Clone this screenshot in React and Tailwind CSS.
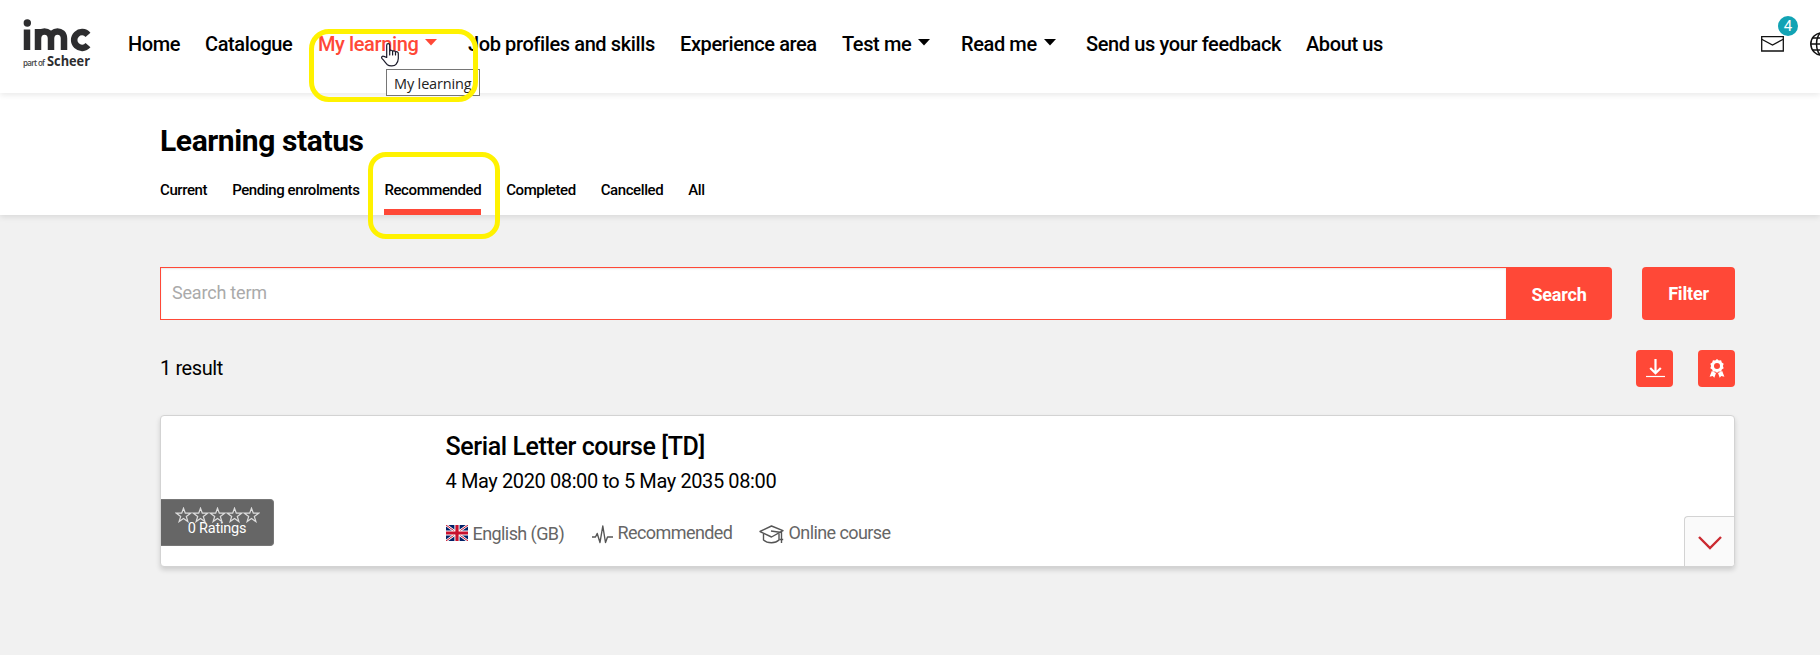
import { useState } from "react";
import { clsx } from "clsx";

const navItems = [
    { label: "Home", className: "w-[77px]" },
    { label: "Catalogue", className: "w-[113px]" },
    { label: "My learning", className: "w-[150px]", menu: true, active: true },
    { label: "Job profiles and skills", className: "w-[212px]" },
    { label: "Experience area", className: "w-[162px]" },
    { label: "Test me", className: "w-[119px]", menu: true },
    { label: "Read me", className: "w-[125px]", menu: true },
    { label: "Send us your feedback", className: "w-[220px]" },
    { label: "About us", className: "w-[90px]" },
];

const tabs = ["Current", "Pending enrolments", "Recommended", "Completed", "Cancelled", "All"];

function Logo() {
    return (
        <svg width="70" height="54" viewBox="0 0 70 54" className="block" fill="#2d2d2f">
            <circle cx="4.3" cy="4" r="3.7" />
            <g fill="none" stroke="#2d2d2f" strokeWidth="6.500">
                <path d="M4 10.500V31" />
                <path d="M15 31V10M15 19.500c0-9.500 13-9.500 13 0V31M28 19.500c0-9.500 13-9.500 13 0V31" />
                <path d="M65 15.800a7.900 7.900 0 1 0 0 10.400" />
            </g>
            <text x="0" y="46.500" fontSize="8" textLength="22" fill="#444" fontWeight="600" fontFamily="Open Sans, sans-serif">part of</text>
            <text x="24" y="46.500" fontSize="13.500" textLength="43" lengthAdjust="spacingAndGlyphs" fontWeight="700" fontFamily="Open Sans, sans-serif">Scheer</text>
        </svg>
    );
}

function Caret() {
    return (
        <svg width="12" height="7" viewBox="0 0 12 7" className="mb-[3px] ml-[7px] shrink-0" fill="currentColor">
            <path d="M0 0h12L6 6.500z" />
        </svg>
    );
}

function MailIcon() {
    return (
        <svg width="23" height="16" viewBox="0 0 23 16" className="block" fill="none" stroke="#111" strokeWidth="1.300">
            <path d="M.7.7h21.600v14.300H.7z" />
            <path d="M.7 3.200l10.800 5.800L22.300 3.200" />
        </svg>
    );
}

function GlobeIcon() {
    return (
        <svg width="24" height="24" viewBox="0 0 24 24" className="block shrink-0" fill="none" stroke="#111" strokeWidth="1.500">
            <circle cx="12" cy="12" r="11.200" />
            <ellipse cx="12" cy="12" rx="5.500" ry="11.200" />
            <path d="M12 .7v22.600M.7 12h22.600M2.500 6h19M2.500 18h19" />
        </svg>
    );
}

function HandCursor() {
    return (
        <svg width="19" height="24" viewBox="0 0 19 24" className="absolute left-[381px] top-[43px]" fill="#fff" stroke="#1a1a2a" strokeWidth="1.200" strokeLinejoin="round" strokeLinecap="round">
            <path d="M5.700 14.500V2.300c0-2.200 3-2.200 3 0V8c.3-1.200 2.800-1 2.900.6.4-1.200 2.800-.9 2.900.7.5-1 2.800-.7 2.800 1.100v5.100c0 2.800-1.200 4.500-2.300 5.800-1.600 2-6.500 2.200-8.600.5C4.500 20 3.800 18.400 1.100 15.600c-1.200-1.500.3-3.100 1.900-2.200z" />
            <path d="M8.700 8v4M11.600 8.600V12M14.500 9.500V12" fill="none" />
        </svg>
    );
}

function FlagGB() {
    return (
        <svg width="22" height="16" viewBox="0 0 22 16" className="block shrink-0">
            <path d="M0 0h22v16H0z" fill="#012169" />
            <path d="M0 0l22 16M22 0L0 16" stroke="#fff" strokeWidth="2.600" />
            <path d="M0 0l22 16M22 0L0 16" stroke="#c8102e" strokeWidth="1" />
            <path d="M11 0v16M0 8h22" stroke="#fff" strokeWidth="5.200" />
            <path d="M11 0v16M0 8h22" stroke="#c8102e" strokeWidth="3.200" />
        </svg>
    );
}

function PulseIcon() {
    return (
        <svg width="21" height="19" viewBox="0 0 21 19" className="mt-[3px] block shrink-0" fill="none" stroke="#555" strokeWidth="1.400" strokeLinejoin="round">
            <path d="M0 12h3.500l1.700-3.500L8 17.500 10.800 1l2.700 16.500 2-5.500H21" />
        </svg>
    );
}

function CapIcon() {
    return (
        <svg width="25" height="19" viewBox="0 0 25 19" className="mt-[3px] block shrink-0" fill="none" stroke="#555" strokeWidth="1.400" strokeLinejoin="round">
            <path d="M1 6.500L12.500 1 24 5.700 12.500 12z" />
            <path d="M4.500 9v6c4 3.600 12 3.600 15.500 0V8.500M12 6l10.500 1.500V18M20.800 14.500h3.400" />
        </svg>
    );
}

function Star() {
    return (
        <svg width="17" height="16" viewBox="0 0 17 16" className="block" fill="none" stroke="#ddd" strokeWidth="1.200">
            <path d="M8.500 1.200l1.800 5h5.300l-4.300 3.200 1.600 5.200-4.400-3.100-4.400 3.100 1.600-5.200L1.400 6.200h5.300z" />
        </svg>
    );
}

export default function App() {
    const [activeTab, setActiveTab] = useState("Recommended");
    const [term, setTerm] = useState("");

    return (
        <div className="relative h-[655px] w-full overflow-hidden bg-[#f1f1f1] font-[Roboto,sans-serif] text-black">
            <header className="relative z-10 flex h-[93px] bg-white shadow-[0_2px_6px_rgba(0,0,0,0.09)]">
                <div className="w-[128px] shrink-0 pt-[19px] pl-[23px]">
                    <Logo />
                </div>
                <nav className="flex h-[87px] shrink-0 items-center text-[20px] font-medium tracking-[-0.39px]">
                    {navItems.map((item) => (
                        <a key={item.label} href="#" className={clsx("flex shrink-0 items-center whitespace-nowrap", item.className, item.active && "text-[#ff4837]")}>
                            {item.label}
                            {item.menu && <Caret />}
                        </a>
                    ))}
                </nav>
                <div className="ml-auto flex w-[59px] shrink-0 pt-[32px]">
                    <div className="relative mt-[4px] mr-[26px]">
                        <MailIcon />
                        <span className="absolute -top-[20px] left-[17px] flex size-5 items-center justify-center rounded-full bg-[#12a3b4] text-[15px] text-white">4</span>
                    </div>
                    <GlobeIcon />
                </div>
            </header>

            <section className="h-[122px] bg-white pl-[160px] shadow-[0_2px_6px_rgba(0,0,0,0.1)]">
                <h1 className="pt-[30px] text-[30px] leading-[36px] font-bold tracking-[-0.4px]">Learning status</h1>
                <div className="flex gap-[25px] pt-[12px]">
                    {tabs.map((tab) => (
                        <button
                            key={tab}
                            onClick={() => setActiveTab(tab)}
                            className={clsx("h-[44px] border-b-6 pt-[1px] text-[15px] font-medium tracking-[-0.41px] whitespace-nowrap", activeTab === tab ? "border-[#ff4837]" : "border-transparent")}
                        >
                            {tab}
                        </button>
                    ))}
                </div>
            </section>

            <main className="w-[1735px] pt-[52px] pl-[160px]">
                <div className="flex h-[53px]">
                    <input
                        type="text"
                        placeholder="Search term"
                        value={term}
                        onChange={(e) => setTerm(e.target.value)}
                        className="flex-1 border border-r-0 border-[#ff4837] bg-white px-[11px] pb-[2px] text-[18px] tracking-[-0.2px] shadow-[inset_0_1px_2px_rgba(0,0,0,0.1)] outline-none placeholder:text-[#aaa]"
                    />
                    <button className="w-[106px] rounded-r bg-[#ff4837] pt-[2px] text-[18px] font-bold tracking-[-0.2px] text-white">Search</button>
                    <button className="ml-[30px] w-[93px] rounded bg-[#ff4837] text-[18px] font-bold tracking-[-0.2px] text-white">Filter</button>
                </div>

                <div className="mt-[30px] flex h-[37px] items-center">
                    <span className="pb-[2px] text-[20px] tracking-[-0.4px]">1 result</span>
                    <button aria-label="Download" className="ml-auto flex size-[37px] items-center justify-center rounded bg-[#ff4837] pl-[2px]">
                        <svg width="19" height="19" viewBox="0 0 19 19" fill="none" stroke="#fff">
                            <path d="M9.500 0v14M4.200 9l5.300 5.300L14.800 9" strokeWidth="2.200" />
                            <path d="M0 17.500h19" strokeWidth="1.200" />
                        </svg>
                    </button>
                    <button aria-label="Certificate" className="ml-[25px] flex size-[37px] items-center justify-center rounded bg-[#ff4837] pl-[1px]">
                        <svg width="16" height="19" viewBox="0 0 16 19" fill="#fff">
                            <path fillRule="evenodd" d="M8 0l1.800 1.500 2.300-.2.700 2.200 1.900 1.300-.8 2.200.8 2.200-1.900 1.300-.7 2.200-2.300-.2L8 13.800l-1.800-1.300-2.300.2-.7-2.200-1.900-1.300.8-2.200-.8-2.200 1.900-1.300.7-2.200 2.300.2zM8 3.900a3 3 0 1 0 0 6 3 3 0 0 0 0-6z" />
                            <path d="M2.800 12l4.200 2L5.300 18.800l-1.600-1.700L.6 17.800zM13.200 12L9 14l1.700 4.800 1.600-1.700 3.100.7z" />
                        </svg>
                    </button>
                </div>

                <article className="mt-[28px] flex h-[152px] overflow-hidden rounded border border-[#d3d3d3] bg-white shadow-[0_3px_5px_rgba(0,0,0,0.15)]">
                    <div className="w-[284px] shrink-0 pt-[83px]">
                        <div className="flex h-[47px] w-[113px] flex-col items-center rounded-r border border-l-0 border-[#777] bg-[#666] pt-[7px]">
                            <div className="flex">
                                {[1, 2, 3, 4, 5].map((n) => (
                                    <Star key={n} />
                                ))}
                            </div>
                            <span className="-mt-[2px] text-[14.5px] leading-[16px] tracking-[-0.2px] text-white">0 Ratings</span>
                        </div>
                    </div>
                    <div className="flex-1 pt-[16px] pl-[0.5px]">
                        <h2 className="text-[25px] leading-[30px] font-medium tracking-[-0.4px]">Serial Letter course [TD]</h2>
                        <p className="mt-[7px] text-[20px] leading-[24px] tracking-[-0.39px]">4 May 2020 08:00 to 5 May 2035 08:00</p>
                        <div className="mt-[28px] flex h-[24px] items-center text-[18px] tracking-[-0.58px] text-[#666]">
                            <FlagGB />
                            <span className="ml-[5px] w-[119px]">English (GB)</span>
                            <PulseIcon />
                            <span className="ml-[5px] w-[141px] pb-[2px]">Recommended</span>
                            <CapIcon />
                            <span className="ml-[5px] pb-[2px]">Online course</span>
                        </div>
                    </div>
                    <button aria-label="Expand" className="mt-auto flex size-[50px] shrink-0 items-center justify-center rounded-tl border-t border-l border-[#d3d3d3] bg-[#fafafa]">
                        <svg width="24" height="14" viewBox="0 0 24 14" className="mt-[3px]" fill="none" stroke="#cb2a31" strokeWidth="2.400">
                            <path d="M1 1l11 11L23 1" />
                        </svg>
                    </button>
                </article>
            </main>

            <div className="pointer-events-none absolute inset-0 z-20">
                <div className="absolute left-[386px] top-[69px] flex h-[27px] w-[94px] items-center border border-[#767676] bg-white pt-[2px] pl-[7px] font-['Open_Sans',sans-serif] text-[14.5px] tracking-[-0.15px] text-[#222]">
                    My learning
                </div>
                <div className="absolute left-[309px] top-[29px] h-[73px] w-[169px] rounded-[20px] border-5 border-[#fff200]" />
                <div className="absolute left-[368px] top-[152px] h-[87px] w-[132px] rounded-[18px] border-5 border-[#fff200]" />
                <HandCursor />
            </div>
        </div>
    );
}
